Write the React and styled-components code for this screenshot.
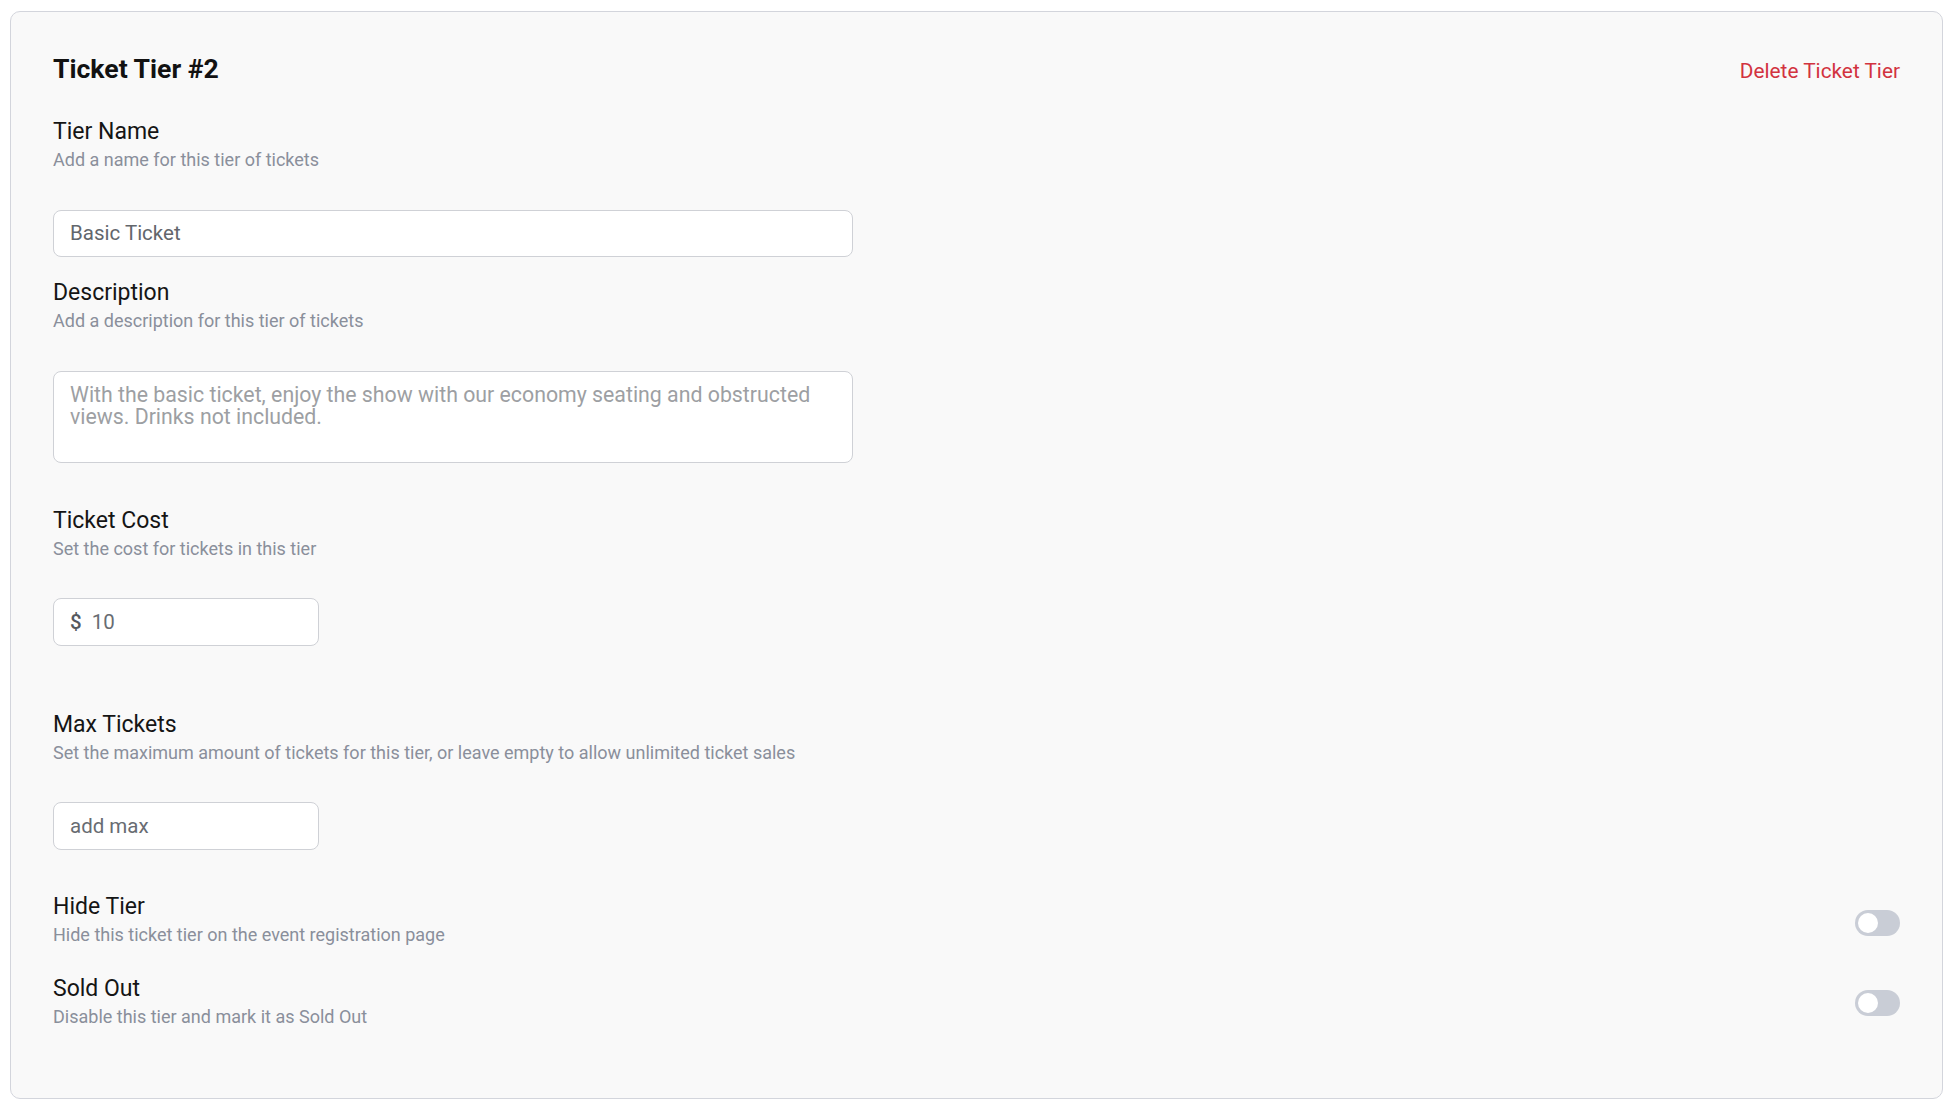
import React, { useState } from "react";
import styled, { createGlobalStyle } from "styled-components";

const GlobalStyle = createGlobalStyle`
  html, body {
    margin: 0;
    padding: 0;
    background: #ffffff;
  }
  body {
    font-family: Roboto, "Liberation Sans", sans-serif;
    -webkit-font-smoothing: antialiased;
  }
  * {
    box-sizing: border-box;
  }
`;

const Page = styled.div`
  padding: 11px 15px 16px 10px;
`;

const Card = styled.section`
  background: #f9f9f9;
  border: 1px solid #d3d5dc;
  border-radius: 10px;
  padding: 41px 42px 70px 42px;
`;

const Header = styled.div`
  display: flex;
  align-items: baseline;
  justify-content: space-between;
`;

const Title = styled.h2`
  margin: 0;
  font-size: 26.6px;
  line-height: 32px;
  font-weight: 700;
  color: #121212;
`;

const DeleteButton = styled.button`
  background: none;
  border: none;
  padding: 0;
  font-family: inherit;
  font-size: 20.8px;
  line-height: 32px;
  color: #d2333f;
  cursor: pointer;
`;

const Field = styled.div`
  margin-top: ${(props) => props.$top}px;
`;

const Label = styled.div`
  font-size: 23px;
  line-height: 28px;
  color: #151515;
`;

const Hint = styled.div`
  margin-top: 3px;
  font-size: 18px;
  line-height: 22px;
  color: #8a8f9b;
`;

const Control = styled.div`
  margin-top: 38.5px;
  width: ${(props) => props.$width}px;
`;

const TextInput = styled.input`
  display: block;
  width: 100%;
  height: 47.5px;
  padding: 0 16px;
  border: 1px solid #cfd1d6;
  border-radius: 8px;
  background: #ffffff;
  font-family: inherit;
  font-size: 20.5px;
  color: #62666c;
  outline: none;

  &::placeholder {
    color: #686c72;
  }
`;

const TextArea = styled.textarea`
  display: block;
  width: 100%;
  height: 92px;
  padding: 12px 16px;
  border: 1px solid #cfd1d6;
  border-radius: 8px;
  background: #ffffff;
  font-family: inherit;
  font-size: 21.3px;
  line-height: 22.5px;
  color: #9b9b9b;
  resize: none;
  outline: none;

  &::placeholder {
    color: #9d9fa3;
  }
`;

const MoneyBox = styled.label`
  display: flex;
  align-items: center;
  height: 47.5px;
  padding: 0 16px;
  border: 1px solid #cfd1d6;
  border-radius: 8px;
  background: #ffffff;
`;

const Currency = styled.span`
  font-size: 20.5px;
  font-weight: 500;
  color: #55595f;
  margin-right: 10px;
`;

const BareInput = styled.input`
  flex: 1;
  min-width: 0;
  border: none;
  padding: 0;
  background: transparent;
  font-family: inherit;
  font-size: 20.5px;
  color: #686c72;
  outline: none;
`;

const ToggleRow = styled.div`
  display: flex;
  align-items: flex-start;
  justify-content: space-between;
  margin-top: ${(props) => props.$top}px;
`;

const Switch = styled.button`
  position: relative;
  width: 45px;
  height: 26px;
  margin-top: ${(props) => props.$offset}px;
  padding: 0;
  border: none;
  border-radius: 13px;
  background: ${(props) => (props.$on ? "#3b82f6" : "#c9cdd6")};
  cursor: pointer;
  transition: background 0.15s;

  &::after {
    content: "";
    position: absolute;
    top: 3px;
    left: ${(props) => (props.$on ? "22px" : "3px")};
    width: 20px;
    height: 20px;
    border-radius: 50%;
    background: #ffffff;
    transition: left 0.15s;
  }
`;

const Toggle = ({ label, hint, top, offset }) => {
  const [on, setOn] = useState(false);
  return (
    <ToggleRow $top={top}>
      <div>
        <Label>{label}</Label>
        <Hint>{hint}</Hint>
      </div>
      <Switch $on={on} $offset={offset} onClick={() => setOn(!on)} />
    </ToggleRow>
  );
};

const App = () => {
  return (
    <Page>
      <GlobalStyle />
      <Card>
        <Header>
          <Title>Ticket Tier #2</Title>
          <DeleteButton>Delete Ticket Tier</DeleteButton>
        </Header>

        <Field $top={31}>
          <Label>Tier Name</Label>
          <Hint>Add a name for this tier of tickets</Hint>
          <Control $width={800}>
            <TextInput defaultValue="Basic Ticket" />
          </Control>
        </Field>

        <Field $top={22}>
          <Label>Description</Label>
          <Hint>Add a description for this tier of tickets</Hint>
          <Control $width={800}>
            <TextArea placeholder="With the basic ticket, enjoy the show with our economy seating and obstructed views. Drinks not included." />
          </Control>
        </Field>

        <Field $top={44}>
          <Label>Ticket Cost</Label>
          <Hint>Set the cost for tickets in this tier</Hint>
          <Control $width={266}>
            <MoneyBox>
              <Currency>$</Currency>
              <BareInput defaultValue="10" />
            </MoneyBox>
          </Control>
        </Field>

        <Field $top={65}>
          <Label>Max Tickets</Label>
          <Hint>
            Set the maximum amount of tickets for this tier, or leave empty to
            allow unlimited ticket sales
          </Hint>
          <Control $width={266}>
            <TextInput placeholder="add max" />
          </Control>
        </Field>

        <Toggle
          top={43}
          offset={17}
          label="Hide Tier"
          hint="Hide this ticket tier on the event registration page"
        />
        <Toggle
          top={29}
          offset={15.5}
          label="Sold Out"
          hint="Disable this tier and mark it as Sold Out"
        />
      </Card>
    </Page>
  );
};

export default App;
